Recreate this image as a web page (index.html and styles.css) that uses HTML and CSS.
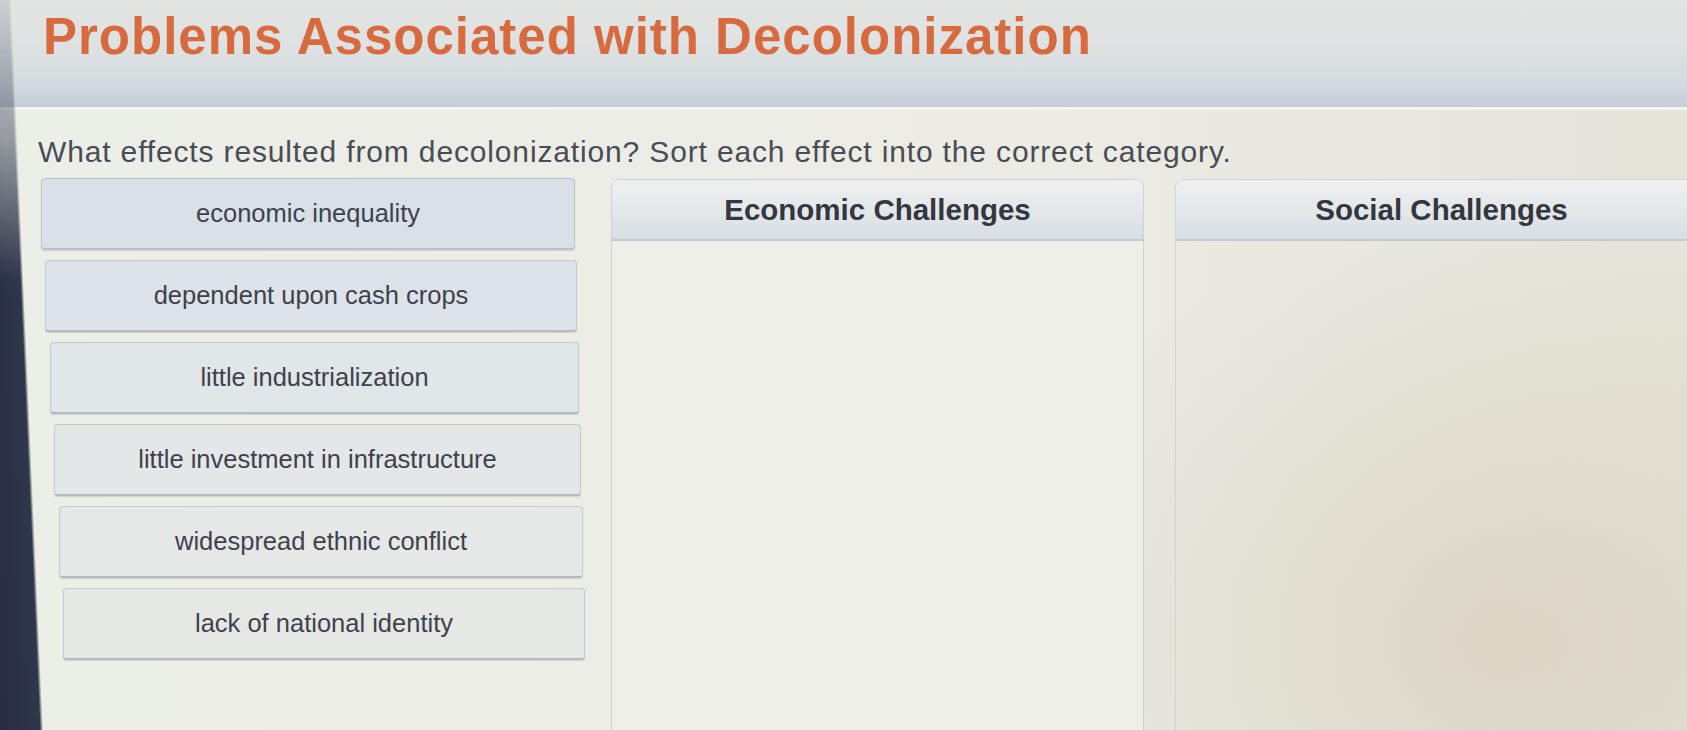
FILE: index.html
```html
<!DOCTYPE html>
<html lang="en">
<head>
<meta charset="utf-8">
<title>Problems Associated with Decolonization</title>
<link rel="stylesheet" href="styles.css">
</head>
<body>
<div class="screen">
  <header class="lesson-header">
    <h1 class="lesson-title">Problems Associated with Decolonization</h1>
  </header>
  <main class="activity">
    <p class="prompt">What effects resulted from decolonization? Sort each effect into the correct category.</p>
    <div class="sorter">
      <ul class="tiles">
        <li class="tile tile-1">economic inequality</li>
        <li class="tile tile-2">dependent upon cash crops</li>
        <li class="tile tile-3">little industrialization</li>
        <li class="tile tile-4">little investment in infrastructure</li>
        <li class="tile tile-5">widespread ethnic conflict</li>
        <li class="tile tile-6">lack of national identity</li>
      </ul>
      <section class="bin">
        <h2 class="bin-title">Economic Challenges</h2>
        <div class="bin-body"></div>
      </section>
      <section class="bin bin-social">
        <h2 class="bin-title">Social Challenges</h2>
        <div class="bin-body"></div>
      </section>
    </div>
  </main>
</div>
</body>
</html>
```
FILE: styles.css
```css
html, body {
  margin: 0;
  padding: 0;
  height: 100%;
}

body {
  font-family: "Liberation Sans", Arial, sans-serif;
  background: #eceee7;
  overflow: hidden;
}

/* dark monitor edge along the left side */
body::after {
  content: "";
  position: fixed;
  inset: 0;
  pointer-events: none;
  background:
    linear-gradient(87.5deg, #262d3f 0, #2f374b 40px, rgba(47,55,75,0) 43px);
  -webkit-mask-image: linear-gradient(to bottom, rgba(0,0,0,0.12) 0, rgba(0,0,0,0.45) 140px, #000 280px);
          mask-image: linear-gradient(to bottom, rgba(0,0,0,0.12) 0, rgba(0,0,0,0.45) 140px, #000 280px);
}

.screen {
  height: 100%;
  display: flex;
  flex-direction: column;
  background:
    radial-gradient(ellipse 520px 420px at 1500px 640px, rgba(200,190,165,0.4), rgba(200,190,165,0) 100%),
    linear-gradient(to right, #eceee8 0, #ecece5 60%, #e6e4d9 100%);
}

.lesson-header {
  height: 110px;
  box-sizing: border-box;
  padding: 7px 0 0 43px;
  background: linear-gradient(to bottom, #e2e4e2 0, #dfe2e2 40%, #d3dadf 80%, #c5ced6 100%);
  border-bottom: 3px solid #f4f5f2;
}

.lesson-title {
  margin: 0;
  font-size: 51px;
  line-height: 60px;
  font-weight: 700;
  color: #d86a3f;
  letter-spacing: 1px;
}

.activity {
  flex: 1;
  padding: 24px 0 0 38px;
  display: flex;
  flex-direction: column;
}

.prompt {
  margin: 0;
  font-size: 30px;
  line-height: 36px;
  letter-spacing: 0.85px;
  color: #4a4c55;
}

.sorter {
  flex: 1;
  margin-top: 8px;
  display: grid;
  grid-template-columns: 542px 533px 533px;
  column-gap: 31px;
  align-items: start;
}

.tiles {
  list-style: none;
  margin: 0;
  padding: 0 0 0 3px;
  display: flex;
  flex-direction: column;
  gap: 10px;
}

.tile {
  height: 72px;
  box-sizing: border-box;
  display: flex;
  align-items: center;
  justify-content: center;
  font-size: 25.5px;
  color: #3f424c;
  background: #e3e7e9;
  border: 1px solid #c3c9cd;
  border-bottom: 2px solid #b3bac1;
  border-radius: 4px;
  box-shadow: 0 1px 1px rgba(120,130,140,0.25);
}

/* the stack drifts slightly to the right as it goes down */
.tile-1 { background: #d9e0e7; border-color: #b9c2cb; margin: 0 5px 0 0; }
.tile-2 { background: #dde3e8; margin: 0 3px 0 4px; }
.tile-3 { background: #e1e6e8; margin: 0 1px 0 9px; }
.tile-4 { background: #e3e7e8; margin: 0 -1px 0 13px; }
.tile-5 { background: #e5e8e6; margin: 0 -3px 0 18px; }
.tile-6 { background: #e6e8e5; margin: 0 -5px 0 22px; }

.bin {
  align-self: stretch;
  display: flex;
  flex-direction: column;
  border: 1px solid #cdd1d1;
  border-bottom: none;
  border-radius: 9px 9px 0 0;
  background: #eeefe9;
  margin-top: 1px;
}

.bin-social {
  background: transparent;
  border-color: #d2d3cf;
}

.bin-title {
  margin: 0;
  height: 61px;
  box-sizing: border-box;
  display: flex;
  align-items: center;
  justify-content: center;
  font-size: 29.5px;
  font-weight: 700;
  color: #35373f;
  background: linear-gradient(to bottom, #eef0f1 0, #e3e7ea 55%, #d6dde3 100%);
  border-bottom: 2px solid #c3c9cf;
  border-radius: 8px 8px 0 0;
}

.bin-body {
  flex: 1;
}
```
